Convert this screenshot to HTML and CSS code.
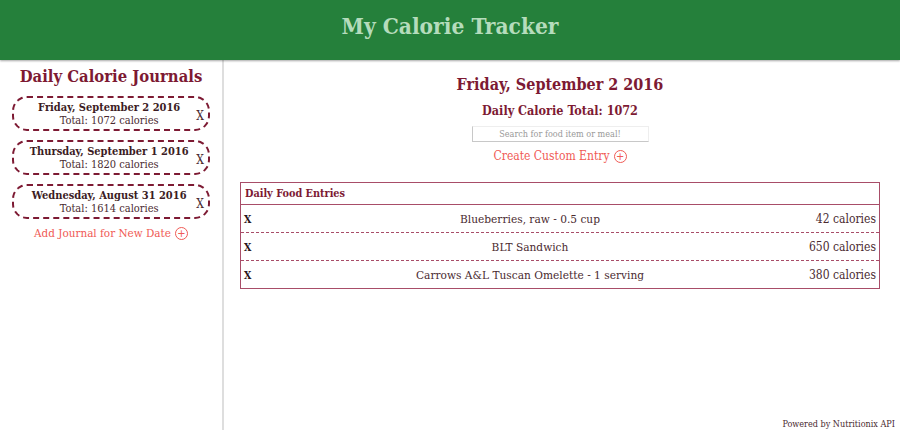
FILE: index.html
```html
<!DOCTYPE html>
<html>
<head>
<meta charset="utf-8">
<link rel="stylesheet" href="styles.css">
</head>
<body>
<header class="topbar"><h1 class="brand">My Calorie Tracker</h1></header>
<div class="layout">
  <aside class="sidebar">
    <h2 class="side-title">Daily Calorie Journals</h2>
    <div class="journal">
      <div class="journal-text"><div class="journal-date">Friday, September 2 2016</div><div class="journal-total">Total: 1072 calories</div></div>
      <span class="journal-x">X</span>
    </div>
    <div class="journal">
      <div class="journal-text"><div class="journal-date">Thursday, September 1 2016</div><div class="journal-total">Total: 1820 calories</div></div>
      <span class="journal-x">X</span>
    </div>
    <div class="journal">
      <div class="journal-text"><div class="journal-date">Wednesday, August 31 2016</div><div class="journal-total">Total: 1614 calories</div></div>
      <span class="journal-x">X</span>
    </div>
    <div class="add-link">Add Journal for New Date <span class="plus">+</span></div>
  </aside>
  <main class="main">
    <h2 class="day-title">Friday, September 2 2016</h2>
    <h3 class="day-total">Daily Calorie Total: 1072</h3>
    <input class="search" type="text" placeholder="Search for food item or meal!">
    <div class="add-link custom">Create Custom Entry <span class="plus">+</span></div>
    <div class="entries">
      <div class="entries-head">Daily Food Entries</div>
      <div class="entry"><span class="entry-x">X</span><span class="entry-name">Blueberries, raw - 0.5 cup</span><span class="entry-cal">42 calories</span></div>
      <div class="entry"><span class="entry-x">X</span><span class="entry-name">BLT Sandwich</span><span class="entry-cal">650 calories</span></div>
      <div class="entry"><span class="entry-x">X</span><span class="entry-name">Carrows A&amp;L Tuscan Omelette - 1 serving</span><span class="entry-cal">380 calories</span></div>
    </div>
    <div class="spacer"></div>
    <div class="powered">Powered by Nutritionix API</div>
  </main>
</div>
</body>
</html>
```
FILE: styles.css
```css
* { box-sizing: border-box; }
html, body { margin: 0; padding: 0; height: 100%; }
body {
  font-family: "DejaVu Serif Condensed", "DejaVu Serif", serif;
  font-stretch: condensed;
  background: #fff;
  color: #4a2a30;
  overflow: hidden;
}
.topbar {
  height: 60px;
  background: #25803b;
  display: flex;
  align-items: center;
  justify-content: center;
  box-shadow: 0 1px 2px rgba(0,0,0,0.35);
  position: relative;
  z-index: 1;
}
.brand {
  margin: 0;
  font-size: 22.5px;
  font-weight: bold;
  color: #b5dcbc;
  padding-bottom: 9px;
  white-space: nowrap;
}
.layout { display: flex; height: 370px; }
.sidebar {
  width: 224px;
  flex: none;
  border-right: 2px solid #dedede;
  padding: 6px 11px 0 11px;
  display: flex;
  flex-direction: column;
  align-items: center;
}
.side-title {
  margin: 0 0 8px 0;
  font-size: 16.5px;
  line-height: 22px;
  font-weight: bold;
  color: #7d1a33;
  white-space: nowrap;
}
.journal {
  width: 198px;
  height: 35px;
  flex: none;
  border: 2px dashed #7d1a33;
  border-radius: 15px;
  display: flex;
  align-items: center;
  margin-bottom: 9px;
  padding: 0 4px 0 8px;
  white-space: nowrap;
}
.journal-text { flex: 1; text-align: center; line-height: 13px; }
.journal-date { font-size: 11px; font-weight: bold; color: #3c1c24; }
.journal-total { font-size: 11px; color: #4a2a30; }
.journal-x { font-size: 12px; color: #4a2a30; margin-top: 4px; }
.add-link {
  color: #f05a55;
  font-size: 11.6px;
  display: flex;
  align-items: center;
  gap: 4px;
  margin-top: -2px;
  white-space: nowrap;
}
.plus {
  width: 13px; height: 13px;
  border: 1px solid #f05a55;
  border-radius: 50%;
  display: inline-flex; align-items: center; justify-content: center;
  font-size: 11px; line-height: 1;
  font-family: "DejaVu Sans", sans-serif;
}
.main {
  flex: 1;
  display: flex;
  flex-direction: column;
  align-items: center;
  padding: 13px 20px 0 16px;
}
.day-title { margin: 0; font-size: 16px; font-weight: bold; color: #7d1a33; line-height: 24px; white-space: nowrap; }
.day-total { margin: 4px 0 5px 0; font-size: 12.5px; font-weight: bold; color: #7d1a33; line-height: 20px; white-space: nowrap; }
.search {
  width: 177px; height: 16px;
  border: none;
  border-left: 1px solid #c8c8c8;
  border-bottom: 1px solid #c8c8c8;
  border-top: 1px solid #eee;
  border-right: 1px solid #eee;
  font-family: inherit;
  font-size: 9px;
  text-align: center;
  padding: 0;
  outline: none;
}
.search::placeholder { color: #999; }
.add-link.custom { margin-top: 7px; font-size: 12px; }
.entries {
  width: 640px;
  margin-top: 19px;
  border: 1px solid #a84d68;
}
.entries-head {
  height: 22px;
  border-bottom: 1px solid #a84d68;
  padding: 0 4px;
  display: flex; align-items: center;
  font-size: 10.8px; font-weight: bold; color: #7d1a33;
}
.entry {
  height: 28px;
  display: flex; align-items: center;
  padding: 0 3px;
  font-size: 11.8px;
  color: #4a2a30;
  border-bottom: 1px dashed #a84d68;
}
.entry:last-child { border-bottom: none; height: 27px; }
.entry-x { width: 60px; font-weight: bold; font-size: 10.5px; color: #2a1418; }
.entry-name { flex: 1; text-align: center; }
.entry-cal { width: 120px; text-align: right; font-size: 12px; }
.spacer { flex: 1; }
.powered {
  align-self: flex-end;
  font-size: 9px;
  color: #4a2a30;
  margin-right: -15px;
  margin-bottom: 1px;
}
```
